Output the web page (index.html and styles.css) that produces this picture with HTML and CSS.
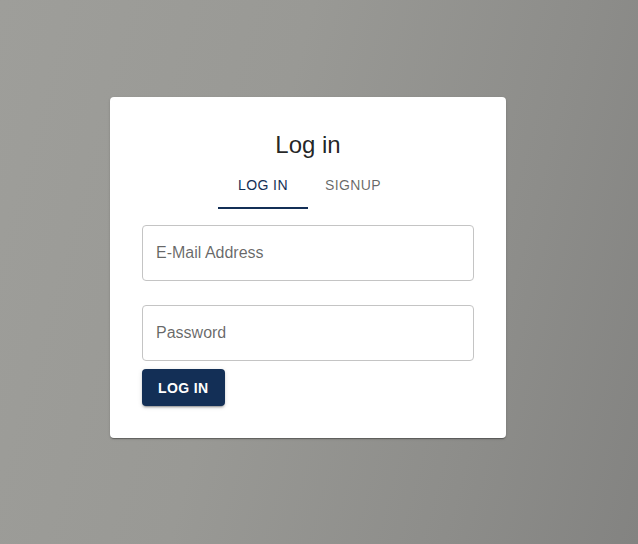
FILE: index.html
```html
<!DOCTYPE html>
<html lang="en">
<head>
<meta charset="utf-8">
<title>Log in</title>
<link rel="stylesheet" href="styles.css">
</head>
<body>
<div class="backdrop">
  <div class="card">
    <h2 class="title">Log in</h2>
    <div class="tabs">
      <button class="tab active">Log in</button>
      <button class="tab">Signup</button>
    </div>
    <form class="form">
      <label class="field field-first"><input type="email" placeholder="E-Mail Address"></label>
      <label class="field"><input type="password" placeholder="Password"></label>
      <button type="button" class="submit">Log in</button>
    </form>
  </div>
</div>
</body>
</html>
```
FILE: styles.css
```css
html, body {
  margin: 0;
  padding: 0;
  height: 100%;
}
body {
  font-family: "Liberation Sans", Arial, sans-serif;
}
.backdrop {
  box-sizing: border-box;
  height: 100%;
  padding: 97px 0 0 110px;
  background: linear-gradient(105deg, #9e9e9a 0%, #999995 40%, #8d8d8a 75%, #838381 100%);
}
.card {
  box-sizing: border-box;
  width: 396px;
  background: #fff;
  border-radius: 4px;
  padding: 32px;
  box-shadow: 0 2px 1px -1px rgba(0,0,0,0.2), 0 1px 1px 0 rgba(0,0,0,0.14), 0 1px 3px 0 rgba(0,0,0,0.12);
}
.title {
  margin: 0;
  text-align: center;
  font-size: 24px;
  font-weight: 400;
  line-height: 32px;
  color: rgba(0,0,0,0.87);
}
.tabs {
  display: flex;
  justify-content: center;
}
.tab {
  width: 90px;
  height: 48px;
  padding: 2px 0 0;
  border: 0;
  border-bottom: 2px solid transparent;
  background: none;
  font-family: inherit;
  font-size: 14px;
  font-weight: 400;
  letter-spacing: 0.4px;
  text-transform: uppercase;
  color: rgba(0,0,0,0.6);
  line-height: 24px;
  cursor: pointer;
}
.tab.active {
  color: #132f56;
  border-bottom-color: #132f56;
}
.form {
  display: flex;
  flex-direction: column;
  align-items: flex-start;
  padding-top: 16px;
}
.field {
  display: block;
  width: 100%;
  margin-top: 24px;
}
.field-first {
  margin-top: 0;
}
.field input {
  box-sizing: border-box;
  width: 100%;
  height: 56px;
  padding: 0 13px;
  border: 1px solid #c4c4c4;
  border-radius: 4px;
  font-family: inherit;
  font-size: 16px;
  color: rgba(0,0,0,0.87);
  outline: none;
}
.field input::placeholder {
  color: rgba(0,0,0,0.6);
}
.submit {
  margin-top: 8px;
  height: 37px;
  padding: 0 16px;
  border: 0;
  border-radius: 4px;
  background: #132f56;
  color: #fff;
  font-family: inherit;
  font-size: 14px;
  font-weight: 700;
  letter-spacing: 0.4px;
  text-transform: uppercase;
  box-shadow: 0 3px 1px -2px rgba(0,0,0,0.2), 0 2px 2px 0 rgba(0,0,0,0.14), 0 1px 5px 0 rgba(0,0,0,0.12);
  cursor: pointer;
}
```
